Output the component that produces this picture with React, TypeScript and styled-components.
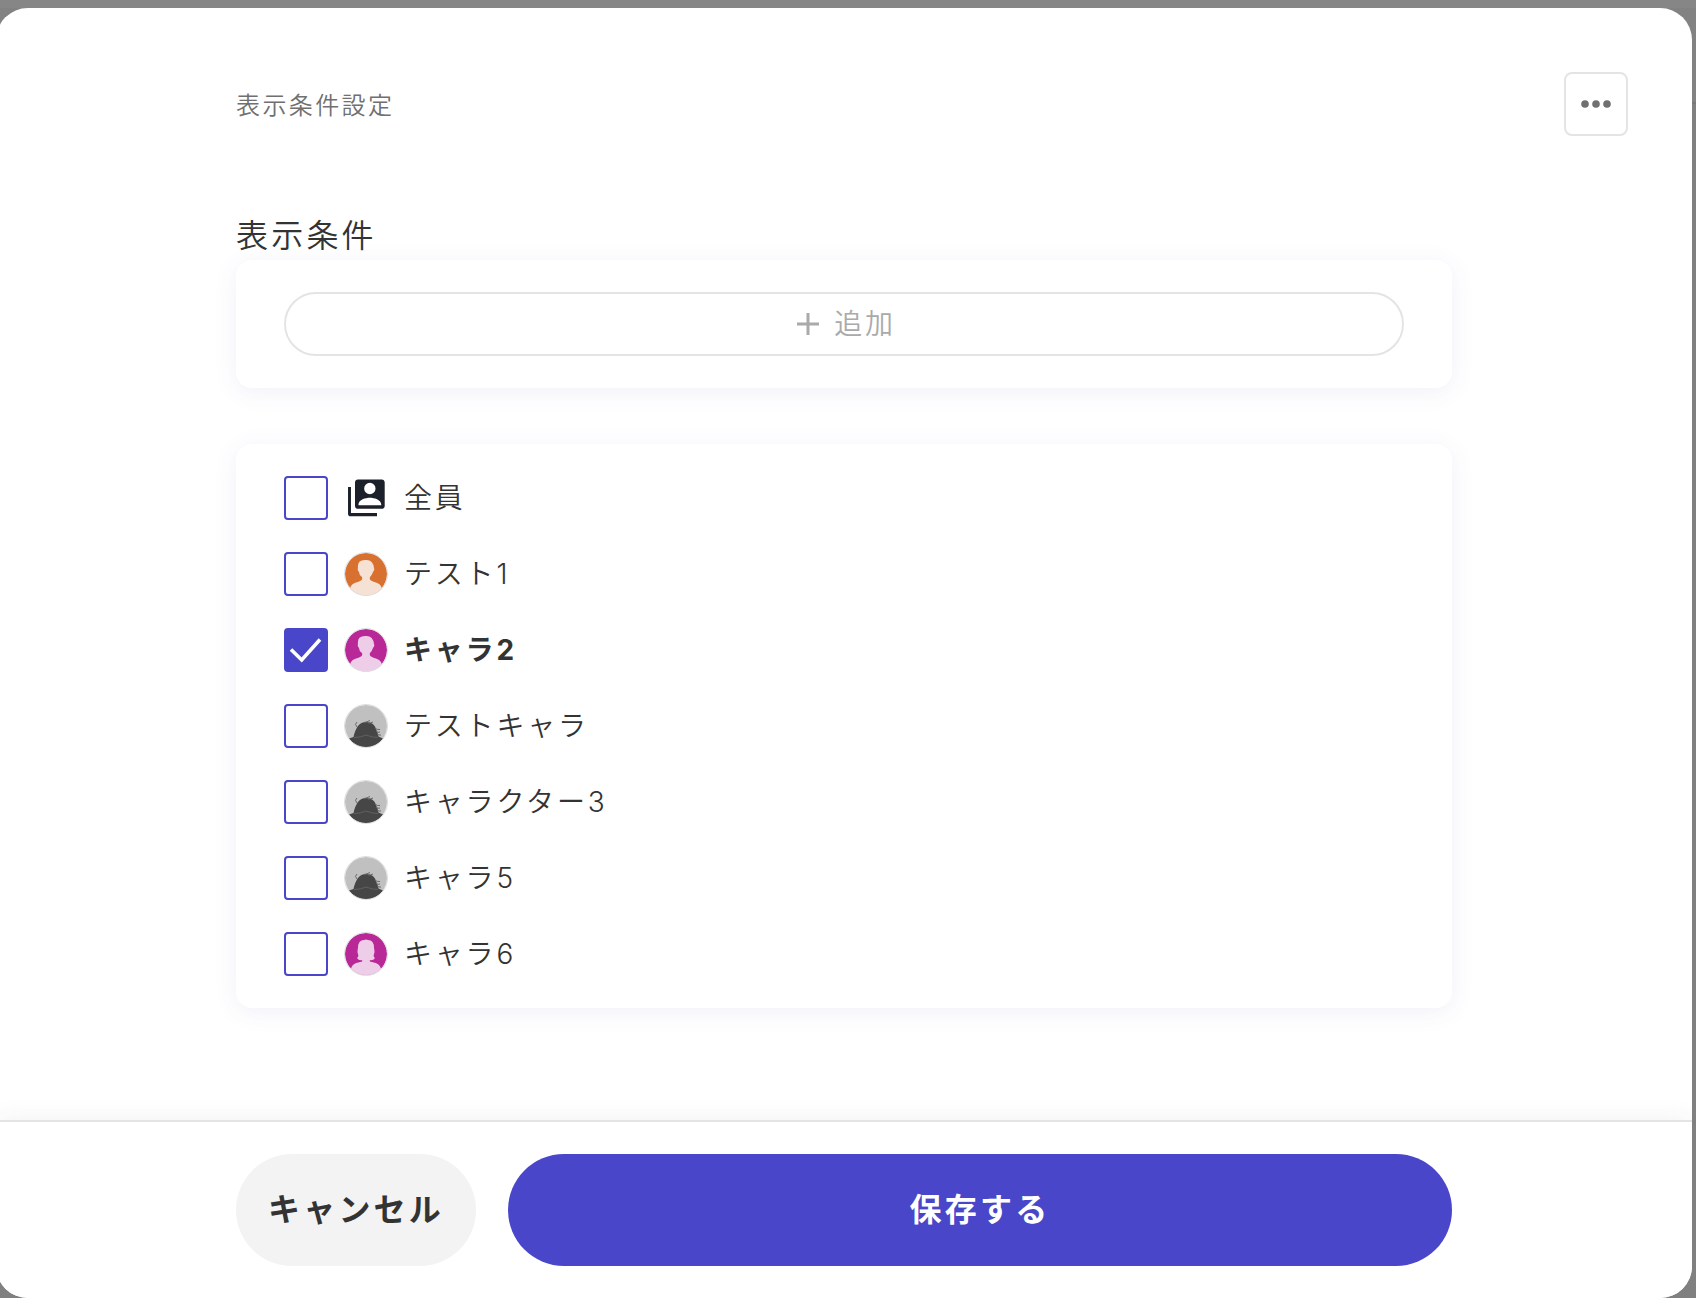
import { useState } from "react";
import styled, { createGlobalStyle } from "styled-components";

const color = {
  primary: "#4946ca",
  text: "#333333",
  textSub: "#707070",
  textDisabled: "#aaaaaa",
  border: "#e4e4e4",
  surface: "#ffffff",
  surfaceSub: "#f3f3f3",
  icon: "#1c202a",
};

const GlobalStyle = createGlobalStyle`
  *, *::before, *::after { box-sizing: border-box; }
  body {
    margin: 0;
    color: ${color.text};
    font-family: "Inter", "Noto Sans CJK JP", sans-serif;
    font-weight: 350;
    font-size: 28px;
    line-height: 44px;
  }
  h1, h2, label, button { letter-spacing: 0.1em; }
  button { font: inherit; cursor: pointer; }
`;

const Backdrop = styled.div`
  display: flex;
  min-height: 100vh;
  padding-top: 8px;
  overflow: hidden;
  background: linear-gradient(
    #868686 8px,
    #828282 8px,
    #828282 102px,
    #787878 102px,
    #787878 104px,
    #808080 104px
  );
`;

const Modal = styled.div`
  flex: 1;
  display: flex;
  flex-direction: column;
  margin: 0 4px 0 -4px;
  border-radius: 32px;
  overflow: hidden;
  background: ${color.surface};
`;

const frame = `
  display: grid;
  grid-template-columns: minmax(128px, 1fr) minmax(0, 1216px) minmax(128px, 1fr);
`;

const Header = styled.header`
  ${frame}
  align-items: center;
  padding-top: 64px;
`;

const Title = styled.h1`
  grid-column: 2;
  margin: 0;
  padding-top: 4px;
  color: ${color.textSub};
  font-size: 24px;
  font-weight: inherit;
  line-height: 36px;
`;

const MenuButton = styled.button`
  display: grid;
  place-items: center;
  justify-self: end;
  width: 64px;
  height: 64px;
  margin-right: 64px;
  padding: 0;
  border: 2px solid ${color.border};
  border-radius: 8px;
  background: ${color.surface};
  color: ${color.textSub};
`;

const Body = styled.main`
  ${frame}
  flex: 1;
  align-content: start;
  padding: 76px 0 112px;
`;

const Sections = styled.div`
  grid-column: 2;
  display: flex;
  flex-direction: column;
  gap: 56px;
`;

const SectionTitle = styled.h2`
  margin: 0;
  font-size: 32px;
  font-weight: inherit;
  line-height: 48px;
`;

const Card = styled.div`
  padding: 32px 48px;
  border-radius: 16px;
  background: ${color.surface};
  box-shadow: 0 4px 24px rgba(73, 70, 170, 0.08);
`;

const AddButton = styled.button`
  display: flex;
  align-items: center;
  justify-content: center;
  gap: 10px;
  width: 100%;
  height: 64px;
  padding: 0;
  border: 2px solid ${color.border};
  border-radius: 32px;
  background: ${color.surface};
  color: ${color.textDisabled};
`;

const List = styled.ul`
  display: flex;
  flex-direction: column;
  gap: 32px;
  margin: 0;
  padding: 0;
  list-style: none;
`;

const Row = styled.label<{ $selected: boolean }>`
  display: flex;
  align-items: center;
  gap: 16px;
  font-weight: ${(p) => (p.$selected ? 700 : 350)};
  cursor: pointer;
`;

const CheckBox = styled.span`
  display: grid;
  width: 44px;
  height: 44px;

  > * { grid-area: 1 / 1; }
  > svg { pointer-events: none; }
`;

const CheckInput = styled.input`
  appearance: none;
  width: 44px;
  height: 44px;
  margin: 0;
  border: 2px solid ${color.primary};
  border-radius: 4px;
  background: ${color.surface};
  cursor: inherit;

  &:checked { background: ${color.primary}; }
`;

const Footer = styled.footer`
  ${frame}
  padding: 32px 0;
  border-top: 2px solid ${color.border};
  background: ${color.surface};
  box-shadow: 0 0 24px rgba(40, 50, 90, 0.07);
`;

const Actions = styled.div`
  grid-column: 2;
  display: flex;
  gap: 32px;
`;

const ActionButton = styled.button<{ $primary?: boolean }>`
  flex: ${(p) => (p.$primary ? "1" : "none")};
  padding: 32px;
  border: 0;
  border-radius: 56px;
  background: ${(p) => (p.$primary ? color.primary : color.surfaceSub)};
  color: ${(p) => (p.$primary ? color.surface : color.text)};
  font-size: 32px;
  font-weight: 700;
  line-height: 48px;
`;

type Face = "all" | "orange" | "magenta" | "magentaLong" | "photo";

const SHORT_HAIR =
  "M6 37C7 31 12 31 16 29Q19 28 18 25Q15 23 15 20Q13 18 14 16Q13 8 21 8Q29 7 30 16Q31 18 29 20Q28 23 26 25Q25 28 28 29C32 31 37 31 38 37A22 22 0 0 1 6 37Z";
const LONG_HAIR =
  "M7 37C8 32 12 31 16 30Q19 30 18 28Q15 29 13 26Q15 25 14 22Q13 20 14 16Q14 8 20 8Q22 7 24 8Q30 8 30 16Q31 20 30 22Q29 25 31 26Q29 29 26 28Q25 30 28 30C32 31 36 32 37 37A22 22 0 0 1 7 37Z";

function Avatar({ face }: { face: Face }) {
  if (face === "all") {
    return (
      <svg width="44" height="44" viewBox="0 0 24 24" fill={color.icon} aria-hidden="true">
        <path d="M3.8 6H2.2v14.600q0 1.400 1.400 1.400h14.400v-1.800H3.8z" />
        <path
          fillRule="evenodd"
          d="M20.6 1.900H7.6C6.7 1.900 6 2.6 6 3.500v12.8c0 .9.7 1.600 1.6 1.600h13c.9 0 1.600-.7 1.600-1.600V3.500c0-.9-.7-1.600-1.600-1.600zM14.1 3.700a3.100 3.100 0 1 1 0 6.200 3.100 3.100 0 0 1 0-6.200zM20.300 15.900H7.900v-.6c.2-2.400 3.800-3.500 6.200-3.500s6 1.100 6.200 3.500z"
        />
      </svg>
    );
  }
  if (face === "photo") {
    return (
      <svg width="44" height="44" viewBox="0 0 44 44" aria-hidden="true">
        <circle cx="22" cy="22" r="21" fill="#c0c0c0" />
        <path
          d="M5 34.500L9.500 33Q11 26 14 22Q17 18 22 18Q30 18 32 25Q34 29 34.500 32.500L39 34.500A21 21 0 0 1 5 34.500Z"
          fill="#464646"
        />
        <path
          d="M20 18.500Q23 18 26 16.500M24 19Q27 19 29 18M31 24Q33 26 36 25.500M32 27Q34 29 36 28M33 30Q35 31.500 37 31M13 23Q10 20 13 18"
          fill="none"
          stroke="#6a6a6a"
          strokeWidth="1"
        />
        <path d="M10 33.500Q17 33.500 22 31Q28 33.500 34 33.500" fill="none" stroke="#606060" />
        <circle cx="22" cy="22" r="21.500" fill="none" stroke="#dedede" />
      </svg>
    );
  }
  const orange = face === "orange";
  return (
    <svg width="44" height="44" viewBox="0 0 44 44" aria-hidden="true">
      <circle cx="22" cy="22" r="21" fill={orange ? "#d87030" : "#b82896"} />
      <path
        d={face === "magentaLong" ? LONG_HAIR : SHORT_HAIR}
        fill={orange ? "#f5e2d4" : "#eecde8"}
      />
      <circle cx="22" cy="22" r="21.500" fill="none" stroke="#dedede" />
    </svg>
  );
}

const characters: { id: string; name: string; face: Face }[] = [
  { id: "all", name: "全員", face: "all" },
  { id: "c1", name: "テスト1", face: "orange" },
  { id: "c2", name: "キャラ2", face: "magenta" },
  { id: "c3", name: "テストキャラ", face: "photo" },
  { id: "c4", name: "キャラクター3", face: "photo" },
  { id: "c5", name: "キャラ5", face: "photo" },
  { id: "c6", name: "キャラ6", face: "magentaLong" },
];

export default function App() {
  const [selected, setSelected] = useState<string[]>(["c2"]);
  const toggle = (id: string) =>
    setSelected((ids) => (ids.includes(id) ? ids.filter((i) => i !== id) : [...ids, id]));

  return (
    <>
      <GlobalStyle />
      <Backdrop>
        <Modal role="dialog" aria-labelledby="dialog-title">
          <Header>
            <Title id="dialog-title">表示条件設定</Title>
            <MenuButton type="button" aria-label="メニュー">
              <svg width="32" height="32" viewBox="0 0 32 32" fill="currentColor" aria-hidden="true">
                <circle cx="5" cy="16" r="3.8" />
                <circle cx="16" cy="16" r="3.8" />
                <circle cx="27" cy="16" r="3.8" />
              </svg>
            </MenuButton>
          </Header>
          <Body>
            <Sections>
              <section>
                <SectionTitle>表示条件</SectionTitle>
                <Card>
                  <AddButton type="button">
                    <svg width="32" height="32" viewBox="0 0 32 32" aria-hidden="true">
                      <path d="M5 16H27M16 5V27" stroke="currentColor" strokeWidth="3" />
                    </svg>
                    追加
                  </AddButton>
                </Card>
              </section>
              <Card>
                <List>
                  {characters.map(({ id, name, face }) => {
                    const checked = selected.includes(id);
                    return (
                      <li key={id}>
                        <Row htmlFor={id} $selected={checked}>
                          <CheckBox>
                            <CheckInput
                              id={id}
                              type="checkbox"
                              checked={checked}
                              onChange={() => toggle(id)}
                            />
                            {checked && (
                              <svg width="44" height="44" viewBox="0 0 44 44" aria-hidden="true">
                                <path
                                  d="M7 21.500L17.700 32L36 11.500"
                                  fill="none"
                                  stroke="#fff"
                                  strokeWidth="3.6"
                                />
                              </svg>
                            )}
                          </CheckBox>
                          <Avatar face={face} />
                          {name}
                        </Row>
                      </li>
                    );
                  })}
                </List>
              </Card>
            </Sections>
          </Body>
          <Footer>
            <Actions>
              <ActionButton type="button">キャンセル</ActionButton>
              <ActionButton type="button" $primary>
                保存する
              </ActionButton>
            </Actions>
          </Footer>
        </Modal>
      </Backdrop>
    </>
  );
}
